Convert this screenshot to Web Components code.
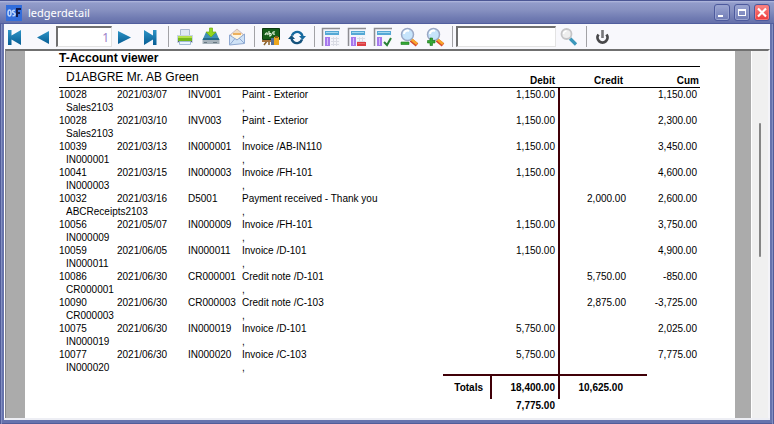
<!DOCTYPE html>
<html lang="en">
<head>
<meta charset="utf-8">
<title>ledgerdetail</title>
<style>
  html, body { height: 100%; margin: 0; }
  body { font-family: "Liberation Sans", Arial, sans-serif; overflow: hidden; }
</style>
</head>
<body>
<app-window caption="ledgerdetail">
  <viewer-toolbar slot="toolbar"></viewer-toolbar>
  <report-viewport>
    <ledger-report></ledger-report>
  </report-viewport>
</app-window>

<script>
const ICONS = {
  first: '<path fill="url(#b)" d="M1 3h3.500v5.500L14 3v15l-9.500-5.500V18H1z"/>',
  prev: '<path fill="url(#b)" d="M16 4v13L4 10.500z"/>',
  next: '<path fill="url(#b)" d="M3 4v13l13-6.500z"/>',
  last: '<path fill="url(#b)" d="M3 3l9 5.500V3h3.500v15H12v-5.500L3 18z"/>',
  print: '<path fill="#dfe8f5" stroke="#a9b9cf" d="M5.500 2.500h9v7h-9z"/><path fill="#c9d5e6" d="M2 8h16v8H2z"/><path fill="#74b81d" d="M3 9h14v5H3z"/><path fill="#b4e04c" d="M3 9h14v2H3z"/><path fill="#55606e" d="M3 14h14v1H3z"/><path fill="#eaf4ff" stroke="#a3bbd5" d="M4.500 14.500h11v3h-11z"/>',
  save: '<path fill="#3f8fb5" d="M5 5h10l3.500 8h-17z"/><path fill="#256a8c" d="M2.500 11h15l1 2h-17z"/><path fill="#a6b2bb" d="M1.500 13h17v4h-17z"/><path fill="#687883" d="M3 15h3v1H3zM12 15h4v1h-4z"/><path fill="#93d51d" stroke="#6aae12" stroke-width=".7" d="M8.500 1h3v4H15l-5 5-5-5h3.500z"/>',
  mail: '<path fill="#f0dcc0" stroke="#b8a8b4" stroke-width=".7" d="M3 8l7-6 7 6-7 5z"/><path fill="#fff5df" d="M5 7h10v5H5z"/><path fill="#edb05c" d="M6 6h8v2H6z"/><path fill="#cfe2f6" stroke="#8fa9d2" d="M2.500 8l7.500 5 7.500-6v9.500l-15 1.500z"/><path fill="none" stroke="#8fa9d2" d="M3 17.500l5-6M17 16l-5-5"/>',
  board: '<path stroke="#8a632c" stroke-width="1.500" d="M6 14l-3 4M8 14v4"/><path fill="#155d19" stroke="#0c3a10" d="M1.500 1.500h17v11h-17z"/><path fill="none" stroke="#e7f6df" stroke-width="1.200" d="M4 8c1-3 3-3 2 0M8 4v4M8 7c3-2 3 2 0 2M14 5c-3-1-3 3 0 2"/><path fill="#a5713a" d="M1 13h11v2H1z"/><path fill="#536e99" d="M10 11h4v7h-4z"/><path fill="#eba51d" d="M13 10h5v8h-5z"/><path fill="#8a5c1f" d="M14 9h3v2h-3z"/>',
  refresh: '<path fill="none" stroke="#176a9f" stroke-width="2.400" d="M5 8.500a5.500 5.500 0 0 1 8.500-2.500c1.200.9 1.800 2 2 3.500"/><path fill="none" stroke="#15527c" stroke-width="2.400" d="M15 12.500a5.500 5.500 0 0 1-8.500 2.500c-1.200-.9-1.800-2-2-3.500"/><path fill="#176a9f" d="M12 9h7l-3.500 4z"/><path fill="#15527c" d="M1 12h7L4.500 8z"/>',
  grid: '<path fill="#f4f5fa" d="M1 1h18v18H1z"/><path fill="none" stroke="#8d8d92" stroke-width="1.500" d="M1.500 19V1.500H19"/><path fill="#55a8d5" d="M4 4h14v4H4z"/><path fill="#a5d9f0" d="M5 5h12v1H5z"/><path fill="#a679ed" d="M4 10h5v9H4z"/><path fill="#d5bcfb" d="M6 11h1v7H6z"/><path stroke="#d9dbe4" d="M10 11.500h8M10 14.500h8M10 17.500h8M12.500 10v9M15.500 10v9"/>',
  gridMinus: '<path fill="#dc3e43" d="M10 15h9v4h-9z"/><path fill="#e86a6a" d="M11 16h7v1h-7z"/>',
  gridCheck: '<path fill="#f6f8fa" d="M10 9h9v10h-9z"/><path fill="none" stroke="#298037" stroke-width="2" d="M11 15l3 3 4-7"/>',
  lens: '<path stroke="#d5482d" stroke-width="4" d="M12 13l6 5"/><path stroke="#f8a72a" stroke-width="2.500" d="M12 12l6 5"/><circle cx="8.500" cy="7.500" r="6" fill="#c6e4fb" stroke="#9ba8c5" stroke-width="1.500"/><path fill="none" stroke="#fff" stroke-width="2" d="M5 7c0-3 3-4 5-3"/>',
  minus: '<path fill="#35a735" stroke="#1b7c1e" stroke-width=".6" d="M2 15h8v2.500H2z"/>',
  plus: '<path fill="#35a735" stroke="#177318" stroke-width=".6" d="M5 11h2.500v2.500H10v2.500H7.500v2.500H5V16H2.500v-2.500H5z"/>',
  search: '<path stroke="#3d98bc" stroke-width="3.200" d="M11 11.500l6 6"/><circle cx="7.500" cy="7" r="5" fill="#eee" stroke="#c5c5c7" stroke-width="1.800"/><path fill="none" stroke="#fff" stroke-width="1.500" d="M4.500 7c0-2 2-3 3-3"/>',
  power: '<path fill="none" stroke="#48484a" stroke-width="2.800" d="M5.500 7.500a5 5 0 1 0 8 0"/><path stroke="#77777a" stroke-width="2.600" d="M9.500 3v8"/>'
};
ICONS.gridMinus = ICONS.grid + ICONS.gridMinus;
ICONS.gridCheck = ICONS.grid + ICONS.gridCheck;
ICONS.zoomOut = ICONS.lens + ICONS.minus;
ICONS.zoomIn = ICONS.lens + ICONS.plus;

class AppWindow extends HTMLElement {
  constructor() {
    super();
    this.attachShadow({ mode: 'open' }).innerHTML = `
      <style>
        :host { display: flex; flex-direction: column; height: 100vh; box-sizing: border-box;
          padding: 0 4px 4px; background: #6673ad;
          box-shadow: inset 1px 0 #515c99, inset 2px 0 #8490c3, inset -1px 0 #515c99, inset -2px 0 #8490c3, inset 0 -1px #515c99; }
        header { display: flex; align-items: center; gap: 4px; flex: none; height: 24px; box-sizing: border-box;
          margin: 0 -4px; padding: 1px 4px 0 6px; border-top: 1px solid #4c5795; border-bottom: 1px solid #515e9e;
          background: linear-gradient(#b3bbdf 0, #929cca 2px, #8791c1 9px, #707bb2 17px, #6570aa); }
        .logo { width: 16px; height: 16px; flex: none; }
        h1 { flex: 1; margin: 0 0 0 2px; font: 11px/20px "Noto Sans", sans-serif; color: #fff; }
        button { width: 16px; height: 17px; padding: 0; border: 1px solid #4d5a9d; border-radius: 3px;
          background: linear-gradient(#9ca6d2, #6f7bb5); box-shadow: inset 0 0 0 1px #98a2cf; }
        button svg { display: block; width: 14px; height: 15px; }
        .close { background: linear-gradient(#f98888, #ee3939); box-shadow: inset 0 0 0 1px #fa7777; }
        main { flex: 1; min-height: 0; display: flex; flex-direction: column; background: #fff;
          border-bottom: 2px solid #edeef4; box-sizing: border-box; }
      </style>
      <header>
        <svg class="logo" viewBox="0 0 16 16" aria-hidden="true"><path fill="#326ddb" d="M0 0h16v16H0z"/><path fill="none" stroke="#bcd5fc" stroke-width="1.600" d="M3.500 5c-2 0-2 6 0 6s2-6 0-6M9 5.500c-3-1-3 2-1 2.500s1 3.500-1.500 2.500"/><path fill="none" stroke="#111b4c" stroke-width="2" d="M11 12V4h4M11 8h3"/></svg>
        <h1></h1>
        <button type="button" aria-label="Minimise"><svg viewBox="0 0 14 15"><path fill="#fff" d="M3 10h5v2H3z"/></svg></button>
        <button type="button" aria-label="Maximise"><svg viewBox="0 0 14 15"><path fill="#fff" fill-rule="evenodd" d="M3 4h8v7H3zM4 6v4h6V6z"/></svg></button>
        <button type="button" class="close" aria-label="Close"><svg viewBox="0 0 14 15"><path stroke="#fff" stroke-width="2.200" d="M3 3.500l8 8M11 3.500l-8 8"/></svg></button>
      </header>
      <main><slot name="toolbar"></slot><slot></slot></main>`;
    this.shadowRoot.querySelector('h1').textContent = this.getAttribute('caption');
  }
}

class ToolButton extends HTMLElement {
  constructor() {
    super();
    this.attachShadow({ mode: 'open' }).innerHTML = `
      <style>
        :host { display: block; flex: none; width: 26px; }
        button { display: flex; justify-content: center; align-items: center; width: 100%; height: 22px;
          padding: 0; border: 0; background: none; }
        svg { width: 20px; height: 20px; }
      </style>
      <button type="button" aria-label="${this.getAttribute('label')}" title="${this.getAttribute('label')}">
        <svg viewBox="0 0 20 20" fill="none"><defs><linearGradient id="b" x2="0" y2="1"><stop stop-color="#2e94c6"/><stop offset="1" stop-color="#075d94"/></linearGradient></defs>${ICONS[this.getAttribute('icon')]}</svg>
      </button>`;
  }
}

class ToolField extends HTMLElement {
  constructor() {
    super();
    this.attachShadow({ mode: 'open' }).innerHTML = `
      <style>
        :host { display: block; flex: none; }
        input { display: block; width: 100%; height: 21px; box-sizing: border-box; padding: 0 2px; margin: 0;
          border: solid; border-width: 2px 1px 1px 2px; border-color: #707070 #e3e3e3 #e3e3e3 #707070;
          border-radius: 0; background: #fff; color: #9b7ec8; font: 12px "Noto Sans", sans-serif; text-align: right; }
      </style>
      <input type="text" aria-label="${this.getAttribute('label')}" value="${this.getAttribute('value') || ''}">`;
  }
}

class ToolSeparator extends HTMLElement {
  constructor() {
    super();
    this.attachShadow({ mode: 'open' }).innerHTML = `
      <style>
        :host { display: flex; justify-content: center; flex: none; width: 8px; }
        i { width: 1px; height: 21px; background: #a2a2a6; }
      </style><i></i>`;
  }
}

class ViewerToolbar extends HTMLElement {
  constructor() {
    super();
    this.attachShadow({ mode: 'open' }).innerHTML = `
      <style>
        :host { display: flex; align-items: center; flex: none; height: 25px; box-sizing: border-box; background: #f8f8fc; }
        .page { width: 56px; }
        .find { width: 100px; }
      </style>
      <tool-button icon="first" label="First page"></tool-button>
      <tool-button icon="prev" label="Previous page"></tool-button>
      <tool-field class="page" label="Page" value="1"></tool-field>
      <tool-button icon="next" label="Next page"></tool-button>
      <tool-button icon="last" label="Last page"></tool-button>
      <tool-separator></tool-separator>
      <tool-button icon="print" label="Print"></tool-button>
      <tool-button icon="save" label="Save"></tool-button>
      <tool-button icon="mail" label="Email"></tool-button>
      <tool-separator></tool-separator>
      <tool-button icon="board" label="Design"></tool-button>
      <tool-button icon="refresh" label="Refresh"></tool-button>
      <tool-separator></tool-separator>
      <tool-button icon="grid" label="Layout"></tool-button>
      <tool-button icon="gridMinus" label="Remove layout"></tool-button>
      <tool-button icon="gridCheck" label="Apply layout"></tool-button>
      <tool-button icon="zoomOut" label="Zoom out"></tool-button>
      <tool-button icon="zoomIn" label="Zoom in"></tool-button>
      <tool-separator></tool-separator>
      <tool-field class="find" label="Find"></tool-field>
      <tool-button icon="search" label="Search"></tool-button>
      <tool-separator></tool-separator>
      <tool-button icon="power" label="Close viewer"></tool-button>`;
  }
}

class ReportViewport extends HTMLElement {
  constructor() {
    super();
    this.attachShadow({ mode: 'open' }).innerHTML = `
      <style>
        :host { flex: 1; min-height: 0; display: flex; border: solid; border-width: 2px 2px 0 1px;
          border-color: #707070 #f4f4f8 #fff #85858a; margin-left: 1px; box-sizing: border-box; background: #ababab; }
        .paper { flex: 1; min-width: 0; overflow: hidden; background: #fff; margin: 0 16px 0 19px; padding: 0 35px 0 34px; }
        .bar { flex: none; width: 17px; box-sizing: border-box; border-left: 1px solid #fff; background: #f0f0f0;
          display: grid; grid-template-rows: 72fr 134fr 161fr; justify-items: center; }
        .thumb { grid-row: 2; width: 2px; background: #858585; border-radius: 1px; }
      </style>
      <div class="paper"><slot></slot></div>
      <div class="bar"><div class="thumb"></div></div>`;
  }
}

const ENTRIES = [
  ['10028', '2021/03/07', 'INV001', 'Paint - Exterior', '1,150.00', '', '1,150.00', 'Sales2103'],
  ['10028', '2021/03/10', 'INV003', 'Paint - Exterior', '1,150.00', '', '2,300.00', 'Sales2103'],
  ['10039', '2021/03/13', 'IN000001', 'Invoice /AB-IN110', '1,150.00', '', '3,450.00', 'IN000001'],
  ['10041', '2021/03/15', 'IN000003', 'Invoice /FH-101', '1,150.00', '', '4,600.00', 'IN000003'],
  ['10032', '2021/03/16', 'D5001', 'Payment received - Thank you', '', '2,000.00', '2,600.00', 'ABCReceipts2103'],
  ['10056', '2021/05/07', 'IN000009', 'Invoice /FH-101', '1,150.00', '', '3,750.00', 'IN000009'],
  ['10059', '2021/06/05', 'IN000011', 'Invoice /D-101', '1,150.00', '', '4,900.00', 'IN000011'],
  ['10086', '2021/06/30', 'CR000001', 'Credit note /D-101', '', '5,750.00', '-850.00', 'CR000001'],
  ['10090', '2021/06/30', 'CR000003', 'Credit note /C-103', '', '2,875.00', '-3,725.00', 'CR000003'],
  ['10075', '2021/06/30', 'IN000019', 'Invoice /D-101', '5,750.00', '', '2,025.00', 'IN000019'],
  ['10077', '2021/06/30', 'IN000020', 'Invoice /C-103', '5,750.00', '', '7,775.00', 'IN000020']
];

class LedgerReport extends HTMLElement {
  constructor() {
    super();
    const rows = ENTRIES.map(([id, date, ref, text, debit, credit, cum, batch]) => `
      <tr><td>${id}</td><td>${date}</td><td>${ref}</td><td colspan="2">${text}</td>
        <td class="debit">${debit}</td><td class="credit">${credit}</td><td class="cum">${cum}</td></tr>
      <tr><td class="batch" colspan="3">${batch}</td><td colspan="2">,</td><td class="debit"></td><td></td><td></td></tr>`).join('');
    this.attachShadow({ mode: 'open' }).innerHTML = `
      <style>
        :host { display: block; color: #000; --rule: #400008; }
        h2 { margin: 0; font-size: 12px; line-height: 15px; border-bottom: 1px solid #000; }
        table { width: 100%; table-layout: fixed; border-collapse: separate; border-spacing: 0; font-size: 10px; line-height: 13px; }
        td, th { padding: 0; height: 13px; text-align: left; white-space: nowrap; }
        thead th { height: 20px; vertical-align: bottom; border-bottom: 1px solid #000; }
        thead .name { font-size: 12px; font-weight: normal; line-height: 20px; padding-left: 7px; }
        .batch { padding-left: 7px; }
        .debit, .credit, .cum { text-align: right; }
        .debit { padding-right: 3px; border-right: 2px solid var(--rule); }
        thead .debit { padding-right: 5px; border-right: 0; }
        .credit { padding-right: 21px; }
        thead .credit { padding-right: 24px; }
        .cum { padding-right: 3px; }
        thead .cum { padding-right: 1px; }
        tfoot td, tfoot th { font-weight: bold; }
        .totals .label { text-align: right; padding-right: 7px; }
        .totals > * { height: 23px; }
        .totals .ruled { border-top: 2px solid var(--rule); }
        .totals .debit { border-left: 2px solid var(--rule); }
        .totals .credit { padding-right: 24px; }
        .balance .debit { border-right-color: transparent; }
      </style>
      <h2>T-Account viewer</h2>
      <table>
        <colgroup><col style="width:58px"><col style="width:71px"><col style="width:54px"><col><col style="width:47px"><col style="width:70px"><col style="width:87px"><col style="width:53px"></colgroup>
        <thead><tr><th class="name" colspan="5">D1ABGRE Mr. AB Green</th><th class="debit">Debit</th><th class="credit">Credit</th><th class="cum">Cum</th></tr></thead>
        <tbody>${rows}</tbody>
        <tfoot>
          <tr class="totals"><td colspan="4"></td><th class="label ruled">Totals</th><td class="debit ruled">18,400.00</td><td class="credit ruled">10,625.00</td><td></td></tr>
          <tr class="balance"><td colspan="5"></td><td class="debit">7,775.00</td><td></td><td></td></tr>
        </tfoot>
      </table>`;
  }
}

customElements.define('tool-button', ToolButton);
customElements.define('tool-field', ToolField);
customElements.define('tool-separator', ToolSeparator);
customElements.define('viewer-toolbar', ViewerToolbar);
customElements.define('report-viewport', ReportViewport);
customElements.define('ledger-report', LedgerReport);
customElements.define('app-window', AppWindow);
</script>
</body>
</html>
